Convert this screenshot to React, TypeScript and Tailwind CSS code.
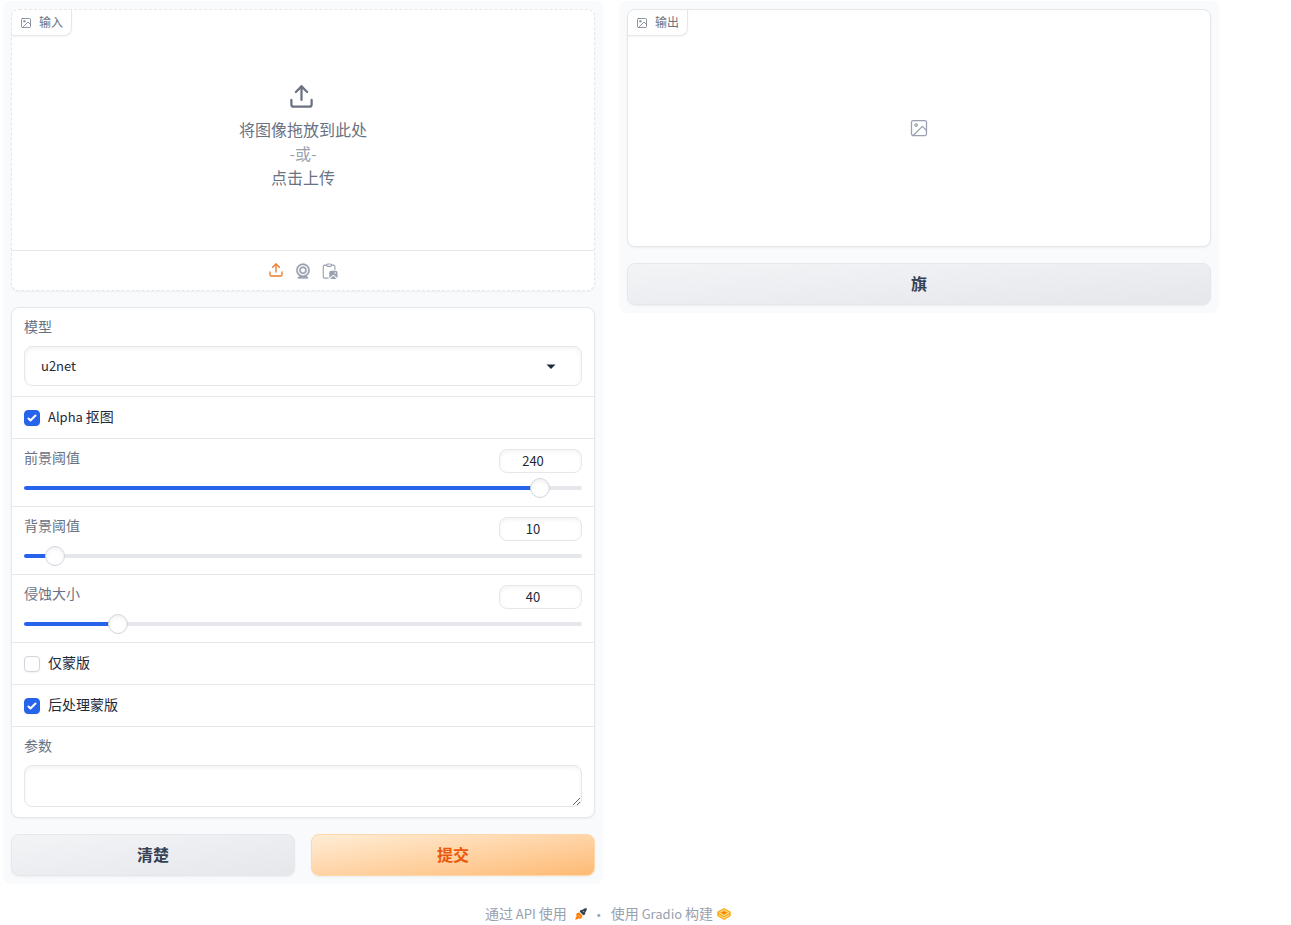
import { useState } from 'react';
import type { ReactNode } from 'react';

type IconProps = { className?: string };

const sliders = [
  { id: 'foreground', label: '前景阈值', initial: 240 },
  { id: 'background', label: '背景阈值', initial: 10 },
  { id: 'erode', label: '侵蚀大小', initial: 40 },
];

const models = ['u2net', 'u2netp', 'u2net_human_seg', 'u2net_cloth_seg', 'silueta'];

const SLIDER_MAX = 255;

function ImageIcon({ className }: IconProps) {
  return (
    <svg viewBox="0 0 24 24" fill="none" stroke="currentColor" strokeWidth="1.5" strokeLinecap="round" strokeLinejoin="round" className={className}>
      <rect x="3" y="3" width="18" height="18" rx="2" />
      <circle cx="8.5" cy="8.5" r="1.5" />
      <path d="M21 15l-5-5L5 21" />
    </svg>
  );
}

function UploadIcon({ className }: IconProps) {
  return (
    <svg viewBox="0 0 24 24" fill="none" stroke="currentColor" strokeWidth="2" strokeLinecap="round" strokeLinejoin="round" className={className}>
      <path d="M21 15v4a2 2 0 0 1-2 2H5a2 2 0 0 1-2-2v-4" />
      <path d="M17 8l-5-5-5 5" />
      <path d="M12 3v12" />
    </svg>
  );
}

function WebcamIcon({ className }: IconProps) {
  return (
    <svg viewBox="0 0 24 24" fill="currentColor" stroke="currentColor" strokeWidth="0.4" className={className}>
      <path d="M12 2c-4.963 0-9 4.038-9 9c0 3.328 1.82 6.232 4.513 7.79l-2.067 1.378A1 1 0 0 0 6 22h12a1 1 0 0 0 .555-1.832l-2.067-1.378C19.18 17.232 21 14.328 21 11c0-4.962-4.037-9-9-9zm0 16c-3.859 0-7-3.141-7-7c0-3.86 3.141-7 7-7s7 3.14 7 7c0 3.859-3.141 7-7 7z" />
      <path d="M12 6c-2.757 0-5 2.243-5 5s2.243 5 5 5s5-2.243 5-5s-2.243-5-5-5zm0 8c-1.654 0-3-1.346-3-3s1.346-3 3-3s3 1.346 3 3s-1.346 3-3 3z" />
    </svg>
  );
}

function PasteIcon({ className }: IconProps) {
  return (
    <svg viewBox="0 0 24 24" className={className}>
      <path
        d="M7.5 4.2H4.8A1.8 1.8 0 0 0 3 6v13.700a1.8 1.8 0 0 0 1.8 1.8H9.500M14 4.200h2.700A1.8 1.8 0 0 1 18.500 6v4"
        fill="none"
        stroke="currentColor"
        strokeWidth="1.5"
        strokeLinecap="round"
      />
      <rect x="7.500" y="2.600" width="6.600" height="3.200" rx="1.600" fill="none" stroke="currentColor" strokeWidth="1.5" />
      <path
        d="M13.500 11.500h6a2.500 2.500 0 0 1 2.500 2.500v6c0 .5-.1 1-.4 1.400l-3.800-3.800a1.800 1.800 0 0 0-2.600 0l-3.800 3.800c-.3-.4-.4-.9-.4-1.400v-6a2.500 2.500 0 0 1 2.500-2.500zM19 13.500a1.100 1.100 0 1 0 0 2.200 1.100 1.100 0 0 0 0-2.200z"
        fill="currentColor"
        fillRule="evenodd"
      />
      <path d="M12.500 22.300l3.400-3.400a.9.9 0 0 1 1.200 0l3.400 3.400c-.3.200-.7.300-1 .3h-6c-.3 0-.7-.1-1-.3z" fill="currentColor" />
    </svg>
  );
}

function RocketIcon({ className }: IconProps) {
  return (
    <svg viewBox="0 0 28 28" className={className}>
      <path d="M27.500.5c-4 0-7 1-9.500 3.500L13 4.500l-2 4.500 2 1.500 4.500 4.500 1.500 2 4.500-2 .5-5c2.500-2.500 3.500-5.500 3.500-9.500z" fill="#343f4f" />
      <circle cx="20" cy="8" r="1.800" fill="#9ca3af" />
      <path d="M10 10.500l7.500 7.500-2 5.500-4 2-2.500-1.500L5 26.500.5 27.500l1-4.500L4 19l-1.500-2.500 2-4z" fill="#ff7c00" />
      <path d="M9 15l4 4-3 3-4-4z" fill="#ffa24d" />
    </svg>
  );
}

function GradioLogo({ className }: IconProps) {
  return (
    <svg viewBox="0 0 28 26" className={className}>
      <path d="M14 1L.5 8.500v8.500L14 25l13.500-8V8.500z" fill="#f9ab16" />
      <path d="M14 5L4 10.500 14 16l10-5.500z" fill="none" stroke="#ffe9bd" strokeWidth="1.700" />
      <path d="M14 8l-4.500 2.500L14 13l4.500-2.500z" fill="#f97700" />
      <path d="M3.500 15L14 21l10.500-6" fill="none" stroke="#ffe9bd" strokeWidth="1.700" />
    </svg>
  );
}

function BlockLabel({ children }: { children: ReactNode }) {
  return (
    <div className="absolute top-0 left-0 flex h-[26px] items-center gap-[7px] rounded-tl-[7px] rounded-br-lg border-r border-b border-gray-200 bg-white px-2 text-xs text-gray-500 shadow-xs">
      <ImageIcon className="size-3" />
      <span className="pb-0.5">{children}</span>
    </div>
  );
}

function CheckboxRow({ children, defaultChecked = false }: { children: ReactNode; defaultChecked?: boolean }) {
  return (
    <label className="flex h-[42px] items-center gap-2 px-3 text-sm text-gray-800">
      <span className="grid size-4 shrink-0">
        <input
          type="checkbox"
          defaultChecked={defaultChecked}
          className="peer col-start-1 row-start-1 size-4 appearance-none rounded border border-gray-300 bg-white shadow-xs checked:border-[#2563eb] checked:bg-[#2563eb]"
        />
        <svg viewBox="0 0 16 16" fill="#fff" className="pointer-events-none invisible col-start-1 row-start-1 size-4 peer-checked:visible">
          <path d="M12.207 4.793a1 1 0 010 1.414l-5 5a1 1 0 01-1.414 0l-2-2a1 1 0 011.414-1.414L6.5 9.086l4.293-4.293a1 1 0 011.414 0z" />
        </svg>
      </span>
      <span className="pb-[3px]">{children}</span>
    </label>
  );
}

function SliderRow({ id, label, initial }: { id: string; label: string; initial: number }) {
  const [value, setValue] = useState(initial);
  const percent = (value / SLIDER_MAX) * 100;

  return (
    <div className="px-3 pt-[10px] pb-4">
      <div className="flex items-start justify-between">
        <label htmlFor={id} className="text-sm leading-4 text-gray-500">
          {label}
        </label>
        <input
          type="number"
          aria-label={label}
          value={value}
          min={0}
          max={SLIDER_MAX}
          onChange={(event) => setValue(Number(event.target.value))}
          className="h-6 w-[83px] rounded-lg border border-gray-200 bg-white px-2 pb-0.5 text-center text-[13px] text-gray-800 inset-shadow-sm focus:outline-none"
        />
      </div>
      <input
        id={id}
        type="range"
        min={0}
        max={SLIDER_MAX}
        value={value}
        onChange={(event) => setValue(Number(event.target.value))}
        style={{ backgroundSize: `${percent}% 100%` }}
        className="mt-[13px] block h-1 w-full cursor-pointer appearance-none rounded-full bg-gray-200 bg-[linear-gradient(#2563eb,#2563eb)] bg-no-repeat [&::-webkit-slider-thumb]:size-5 [&::-webkit-slider-thumb]:appearance-none [&::-webkit-slider-thumb]:rounded-full [&::-webkit-slider-thumb]:border [&::-webkit-slider-thumb]:border-gray-300 [&::-webkit-slider-thumb]:bg-white [&::-webkit-slider-thumb]:shadow-[inset_0_2px_4px_rgba(0,0,0,0.06)]"
      />
    </div>
  );
}

const secondaryButton =
  'h-[42px] flex-1 rounded-lg border border-gray-200 bg-linear-to-br from-[#f3f4f6] to-[#e5e7eb] pb-0.5 text-base font-semibold text-gray-700 shadow-xs';

export default function App() {
  return (
    <div className="ml-[3px] max-w-[1216px] bg-white pt-px font-['Noto_Sans_CJK_SC',sans-serif]">
      <main className="flex items-start gap-4">
        <section className="flex flex-1 flex-col gap-4 rounded-lg bg-gray-50 p-2">
          <div className="relative rounded-lg border border-dashed border-gray-200 bg-white shadow-xs">
            <BlockLabel>输入</BlockLabel>
            <button type="button" className="flex h-60 w-full flex-col items-center justify-center pt-3 text-base leading-6 text-gray-500">
              <span className="mb-1 size-[30px]">
                <UploadIcon className="size-[27px]" />
              </span>
              <span>将图像拖放到此处</span>
              <span className="text-gray-400">-或-</span>
              <span>点击上传</span>
            </button>
            <div className="flex h-10 items-center justify-center gap-[9px] border-t border-gray-200 text-gray-400">
              <button type="button" aria-label="上传" className="flex size-[18px] justify-center text-[#ea7a2b]">
                <UploadIcon className="size-4" />
              </button>
              <button type="button" aria-label="摄像头">
                <WebcamIcon className="size-[18px]" />
              </button>
              <button type="button" aria-label="粘贴">
                <PasteIcon className="size-[18px]" />
              </button>
            </div>
          </div>

          <form className="divide-y divide-gray-200 rounded-lg border border-gray-200 bg-white shadow-xs">
            <div className="px-3 py-[10px]">
              <label htmlFor="model" className="mb-3 block text-sm leading-4 text-gray-500">
                模型
              </label>
              <div className="relative">
                <select
                  id="model"
                  className="block h-10 w-full appearance-none rounded-lg border border-gray-200 bg-white px-4 text-[13px] text-gray-800 inset-shadow-sm focus:outline-none"
                >
                  {models.map((model) => (
                    <option key={model}>{model}</option>
                  ))}
                </select>
                <svg viewBox="0 0 18 18" className="pointer-events-none absolute top-[11px] right-[22px] size-[18px] fill-gray-800">
                  <path d="M4.5 7.5l4.5 4.5 4.5-4.5z" />
                </svg>
              </div>
            </div>
            <CheckboxRow defaultChecked>
              <span className="text-[13px]">Alpha </span>抠图
            </CheckboxRow>
            {sliders.map((slider) => (
              <SliderRow key={slider.id} {...slider} />
            ))}
            <CheckboxRow>仅蒙版</CheckboxRow>
            <CheckboxRow defaultChecked>后处理蒙版</CheckboxRow>
            <div className="px-3 py-[10px]">
              <label htmlFor="params" className="mb-3 block text-sm leading-4 text-gray-500">
                参数
              </label>
              <textarea
                id="params"
                rows={1}
                className="block h-[42px] w-full resize-y rounded-lg border border-gray-200 bg-white px-3 py-2 text-sm text-gray-800 inset-shadow-sm focus:outline-none"
              />
            </div>
          </form>

          <div className="flex gap-4">
            <button type="button" className={secondaryButton}>
              清楚
            </button>
            <button
              type="button"
              className="h-[42px] flex-1 rounded-lg border border-[#fed7aa] bg-linear-to-br from-[#ffedd5] to-[#fdba74] pb-0.5 text-base font-semibold text-[#ea580c] shadow-xs"
            >
              提交
            </button>
          </div>
        </section>

        <section className="flex flex-1 flex-col gap-4 rounded-lg bg-gray-50 p-2">
          <div className="relative flex h-[238px] items-center justify-center rounded-lg border border-gray-200 bg-white text-gray-400 shadow-xs">
            <BlockLabel>输出</BlockLabel>
            <ImageIcon className="size-5" />
          </div>
          <div className="flex">
            <button type="button" className={secondaryButton}>
              旗
            </button>
          </div>
        </section>
      </main>

      <footer className="mt-5 flex items-center justify-center pr-1.5 text-sm leading-[18px] text-gray-400">
        <button type="button" className="flex items-center gap-2">
          <span>
            通过<span className="text-[13px]"> API </span>使用
          </span>
          <RocketIcon className="size-3" />
        </button>
        <span className="mx-[5px]">·</span>
        <a href="#gradio" className="flex items-center gap-1">
          <span>
            使用<span className="text-[13px]"> Gradio </span>构建
          </span>
          <GradioLogo className="size-[14px]" />
        </a>
      </footer>
    </div>
  );
}
